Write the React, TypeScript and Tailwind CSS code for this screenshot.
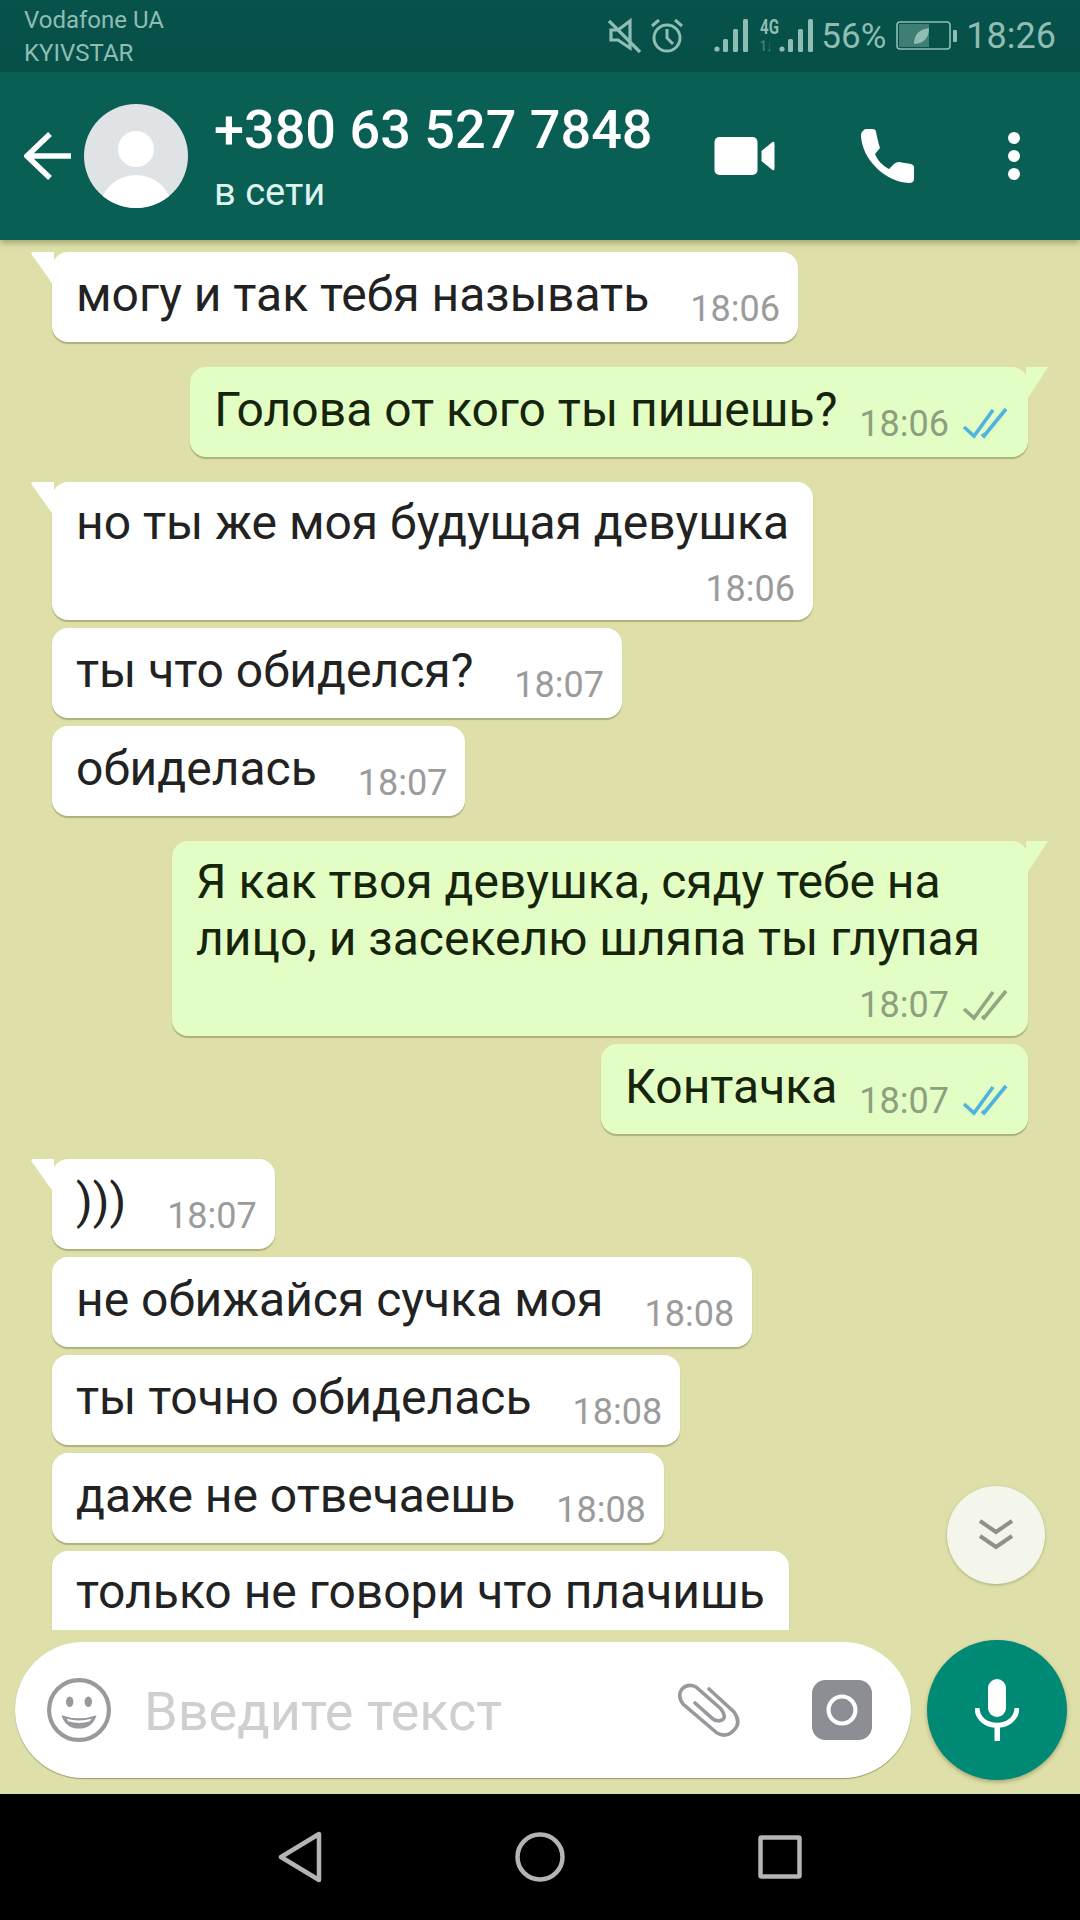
import { ReactNode } from 'react'

const FONT = 'font-[Roboto,"Noto_Sans",sans-serif]'

function Ticks({ read, flat }: { read?: boolean; flat?: boolean }) {
  const color = read ? '#4fb3e0' : '#93a683'
  return (
    <svg width="46" height="32" viewBox="0 0 46 32" fill="none" stroke={color} strokeWidth="3.6" className={`ml-[13px] shrink-0 ${flat ? 'mb-[5px]' : ''}`}>
      <path d="M2 20 L12 29 L31 3" />
      <path d="M20 27 L22 29 L44 2" />
    </svg>
  )
}

function Tail({ out }: { out?: boolean }) {
  return out ? (
    <svg width="24" height="36" viewBox="0 0 24 36" className="absolute -right-[22px] top-0">
      <path d="M0 0 L22 0 L0 34 Z" fill="#e2fec5" />
    </svg>
  ) : (
    <svg width="24" height="36" viewBox="0 0 24 36" className="absolute -left-[22px] top-0">
      <path d="M24 0 L3 0 Q0 0 2 3 L24 34 Z" fill="#ffffff" />
    </svg>
  )
}

type MsgProps = {
  text: ReactNode
  time?: string
  out?: boolean
  tail?: boolean
  read?: boolean
  ticks?: boolean
  stacked?: boolean
  className?: string
}

function Msg({ text, time, out, tail, read, ticks, stacked, className }: MsgProps) {
  const timeEl = time && (
    <span className={`text-[36px] leading-[40px] whitespace-nowrap ${out ? 'text-[#8d9f7e]' : 'text-[#9b9b9b]'}`}>{time}</span>
  )
  return (
    <div
      className={`relative shrink-0 rounded-[16px] shadow-[0_2px_1px_rgba(90,90,40,0.35)] ${out ? 'self-end bg-[#e2fec5] text-[#16240c]' : 'self-start bg-white text-[#222222]'} ${className ?? ''}`}
    >
      {tail && <Tail out={out} />}
      {stacked ? (
        <div className={`pl-6 pt-[12px] pb-[11px] ${ticks ? 'pr-[20px]' : 'pr-[24px]'}`}>
          <div className={`text-[48px] leading-[57px] whitespace-pre-line ${ticks ? 'mr-[28px]' : ''}`}>{text}</div>
          <div className={`flex items-center justify-end mt-[18px] h-[40px] ${ticks ? '' : '-mr-[6px]'}`}>
            {timeEl}
            {ticks && <Ticks read={read} />}
          </div>
        </div>
      ) : (
        <div className={`flex items-end pl-6 h-[90px] pb-[13px] ${ticks ? 'pr-[20px]' : 'pr-[18px]'}`}>
          <span className="text-[48px] leading-[58px] whitespace-nowrap mb-[5px]">{text}</span>
          <span className={`shrink-0 ${ticks ? 'w-[22px]' : 'w-[41px]'}`} />
          {timeEl}
          {ticks && <Ticks read={read} flat />}
        </div>
      )}
    </div>
  )
}

function StatusBar() {
  const c = '#8fbdb3'
  return (
    <div className="h-[72px] shrink-0 flex items-center justify-between pl-6 pr-[24px] bg-gradient-to-b from-[#07524b] to-[#054f47] text-[#8fbdb3]">
      <div className="text-[24px] leading-[33px] mt-[2px]">
        <div>Vodafone UA</div>
        <div>KYIVSTAR</div>
      </div>
      <div className="flex items-center">
        {/* muted speaker */}
        <svg width="34" height="36" viewBox="0 0 34 36" fill="none" stroke={c} strokeWidth="3.2">
          <path d="M3 12 H10 L22 3 V30 L10 22 H3 Z" />
          <path d="M1 3 L32 34" />
        </svg>
        {/* alarm */}
        <svg width="34" height="36" viewBox="0 0 34 36" fill="none" stroke={c} strokeWidth="3" className="ml-[8px]">
          <circle cx="17" cy="20" r="13" />
          <path d="M17 11 V20 L23 26" />
          <path d="M2 8 L9 2 M32 8 L25 2" />
        </svg>
        {/* signal 1 */}
        <svg width="36" height="36" viewBox="0 0 36 36" fill={c} className="ml-[30px]">
          <circle cx="3" cy="31" r="2.6" />
          <rect x="9" y="21" width="5" height="13" rx="1.5" />
          <rect x="19" y="11" width="5" height="23" rx="1.5" />
          <rect x="29" y="1" width="5" height="33" rx="1.5" />
        </svg>
        {/* 4G + signal 2 */}
        <div className="relative w-[20px] h-[36px] ml-[10px]">
          <span className="absolute left-0 top-[-1px] text-[21px] leading-[20px] font-bold text-[#8fbdb3] scale-x-[0.72] origin-left">4G</span>
          <span className="absolute left-0 top-[21px] text-[15px] leading-[15px] font-bold text-[#3f8277] scale-x-75 origin-left">1↓</span>
        </div>
        <svg width="36" height="36" viewBox="0 0 36 36" fill={c} className="-ml-[1px]">
          <circle cx="3" cy="31" r="2.6" />
          <rect x="9" y="21" width="5" height="13" rx="1.5" />
          <rect x="19" y="11" width="5" height="23" rx="1.5" />
          <rect x="29" y="1" width="5" height="33" rx="1.5" />
        </svg>
        <span className="text-[35px] leading-none ml-[6px]">56%</span>
        {/* battery with leaf */}
        <svg width="62" height="30" viewBox="0 0 62 30" className="ml-[10px]">
          <rect x="1" y="1" width="53" height="27" rx="3" fill="none" stroke={c} strokeWidth="1.6" />
          <rect x="3" y="3" width="30" height="23" fill="#3f7e74" />
          <rect x="57" y="9" width="4" height="12" rx="1" fill={c} />
          <path d="M18 23 Q18 9 33 7 Q33 22 18 23 Z" fill={c} />
        </svg>
        <span className="text-[36px] leading-none ml-[8px]">18:26</span>
      </div>
    </div>
  )
}

function ChatHeader() {
  return (
    <div className="relative z-10 h-[168px] shrink-0 flex items-center bg-[#0a5f55] shadow-[0_3px_6px_rgba(80,80,30,0.4)]">
      <svg width="48" height="48" viewBox="0 0 48 48" fill="none" stroke="white" strokeWidth="5.5" className="ml-[24px] shrink-0">
        <path d="M47 24 H4 M26 2 L3 24 L26 46" />
      </svg>
      {/* avatar */}
      <div className="relative ml-[12px] w-[104px] h-[104px] rounded-full bg-[#dfe3e6] overflow-hidden shrink-0">
        <div className="absolute left-[34px] top-[27px] w-[36px] h-[36px] rounded-full bg-white" />
        <div className="absolute left-[15px] top-[71px] w-[74px] h-[74px] rounded-full bg-white" />
      </div>
      <div className="ml-[26px] w-[470px] shrink-0 mt-[2px]">
        <div className="text-[54px] leading-[56px] font-medium text-white whitespace-nowrap">+380 63 527 7848</div>
        <div className="text-[38px] leading-[40px] text-[#dff3ee] mt-[14px]">в сети</div>
      </div>
      <svg width="61" height="38" viewBox="0 0 60 38" fill="white" className="ml-[30px] shrink-0">
        <rect x="0" y="0" width="43" height="38" rx="5" />
        <path d="M47 14 L58 5 Q60 4 60 7 V31 Q60 34 58 33 L47 24 Z" />
      </svg>
      <svg width="54" height="54" viewBox="0 0 54 54" className="ml-[86px] shrink-0">
        <path
          fill="white"
          d="M2 2 Q0 3 0 7 C1 30 24 53 48 54 Q53 54 53 50 V38 Q53 36 50 35 L38 33 Q35 33 33 35 L28 40 C21 36 17 32 14 25 L19 19 Q18 16 17 12 L15 3 Q15 0 11 0 H5 Q3 0 2 2 Z"
        />
      </svg>
      <div className="ml-[93px] flex flex-col gap-[6px] shrink-0">
        <span className="w-[12px] h-[12px] rounded-full bg-white" />
        <span className="w-[12px] h-[12px] rounded-full bg-white" />
        <span className="w-[12px] h-[12px] rounded-full bg-white" />
      </div>
    </div>
  )
}

function InputRow() {
  return (
    <div className="h-[164px] shrink-0 flex items-start pl-[15px] bg-[#dfdfa9]">
      <div className="mt-[12px] w-[896px] h-[136px] rounded-full bg-white shadow-[0_1px_1px_rgba(90,90,40,0.5)] flex items-center shrink-0">
        <svg width="64" height="64" viewBox="0 0 62 62" className="ml-[32px] shrink-0">
          <circle cx="31" cy="31" r="29" fill="none" stroke="#98999c" strokeWidth="4" />
          <ellipse cx="22" cy="23" rx="3.6" ry="5" fill="#98999c" />
          <ellipse cx="40" cy="23" rx="3.6" ry="5" fill="#98999c" />
          <path d="M14 36 Q31 42 48 36 Q44 49 31 49 Q18 49 14 36 Z" fill="#98999c" />
          <path d="M19 39.5 Q31 43 43 39.5 L41.5 42 Q31 45 20.5 42 Z" fill="white" />
        </svg>
        <span className="ml-[33px] mt-[4px] w-[359px] text-[54px] leading-none text-[#cfcfcf] whitespace-nowrap shrink-0">Введите текст</span>
        <svg width="66" height="58" viewBox="0 0 66 58" fill="none" stroke="#98999c" strokeWidth="3.6" strokeLinecap="round" className="ml-[173px] shrink-0">
          <path d="M33 8 L58 31 Q66 42 57 50 Q50 57 41 52 L7 23 Q1 15 6 8 Q12 2 20 6 L45 28 Q51 36 46 39 Q41 41 37 38 L19 22" />
        </svg>
        <svg width="60" height="60" viewBox="0 0 58 58" className="ml-[70px] shrink-0">
          <rect width="58" height="58" rx="13" fill="#8c8e93" />
          <circle cx="29" cy="29" r="13" fill="none" stroke="white" strokeWidth="4" />
        </svg>
      </div>
      <div className="ml-[16px] mt-[10px] w-[140px] h-[140px] rounded-full bg-[#008a76] shadow-[0_2px_4px_rgba(80,80,30,0.4)] flex items-center justify-center shrink-0">
        <svg width="44" height="62" viewBox="0 0 44 62">
          <rect x="13" y="0" width="18" height="38" rx="9" fill="white" />
          <path d="M2 29 C3 52 41 52 42 29" fill="none" stroke="white" strokeWidth="5" />
          <rect x="19.5" y="45" width="5.5" height="17" fill="white" />
        </svg>
      </div>
    </div>
  )
}

function NavBar() {
  return (
    <div className="h-[126px] shrink-0 bg-black flex items-center justify-center">
      <svg width="44" height="52" viewBox="0 0 44 52" fill="none" stroke="#b4b4b4" strokeWidth="4.5" strokeLinejoin="round" className="shrink-0">
        <path d="M41 3 V49 L3 26 Z" />
      </svg>
      <svg width="50" height="50" viewBox="0 0 50 50" fill="none" stroke="#b4b4b4" strokeWidth="4.5" className="ml-[193px] shrink-0">
        <circle cx="25" cy="25" r="22.5" />
      </svg>
      <svg width="44" height="44" viewBox="0 0 44 44" fill="none" stroke="#b4b4b4" strokeWidth="4.5" strokeLinejoin="round" className="ml-[193px] shrink-0">
        <rect x="2.5" y="2.5" width="39" height="39" rx="1" />
      </svg>
    </div>
  )
}

export default function App() {
  return (
    <div className={`${FONT} relative w-[1080px] h-[1920px] flex flex-col overflow-hidden bg-[#dfdfa9]`}>
      <StatusBar />
      <ChatHeader />

      {/* messages */}
      <div className="relative flex-1 min-h-0 overflow-hidden flex flex-col pl-[52px] pr-[52px] pt-[12px]">
        <Msg tail text="могу и так тебя называть" time="18:06" />
        <Msg out tail ticks read text="Голова от кого ты пишешь?" time="18:06" className="mt-[25px]" />
        <Msg tail stacked text="но ты же моя будущая девушка" time="18:06" className="mt-[25px]" />
        <Msg text="ты что обиделся?" time="18:07" className="mt-[8px]" />
        <Msg text="обиделась" time="18:07" className="mt-[8px]" />
        <Msg out tail ticks stacked text={'Я как твоя девушка, сяду тебе на\nлицо, и засекелю шляпа ты глупая'} time="18:07" className="mt-[25px]" />
        <Msg out ticks read text="Контачка" time="18:07" className="mt-[8px]" />
        <Msg tail text=")))" time="18:07" className="mt-[25px]" />
        <Msg text="не обижайся сучка моя" time="18:08" className="mt-[8px]" />
        <Msg text="ты точно обиделась" time="18:08" className="mt-[8px]" />
        <Msg text="даже не отвечаешь" time="18:08" className="mt-[8px]" />
        {/* runs under the input row, its time is out of view */}
        <Msg stacked text="только не говори что плачишь" className="mt-[8px]" />

        {/* scroll to bottom */}
        <div className="absolute left-[947px] top-[1246px] w-[98px] h-[98px] rounded-full bg-[#f4f6ec] shadow-[0_1px_3px_rgba(80,80,30,0.35)] flex items-center justify-center">
          <svg width="36" height="34" viewBox="0 0 36 34" fill="none" stroke="#8f918c" strokeWidth="4">
            <path d="M2 3 L18 14 L34 3" />
            <path d="M2 18 L18 29 L34 18" />
          </svg>
        </div>
      </div>

      <InputRow />
      <NavBar />
    </div>
  )
}
